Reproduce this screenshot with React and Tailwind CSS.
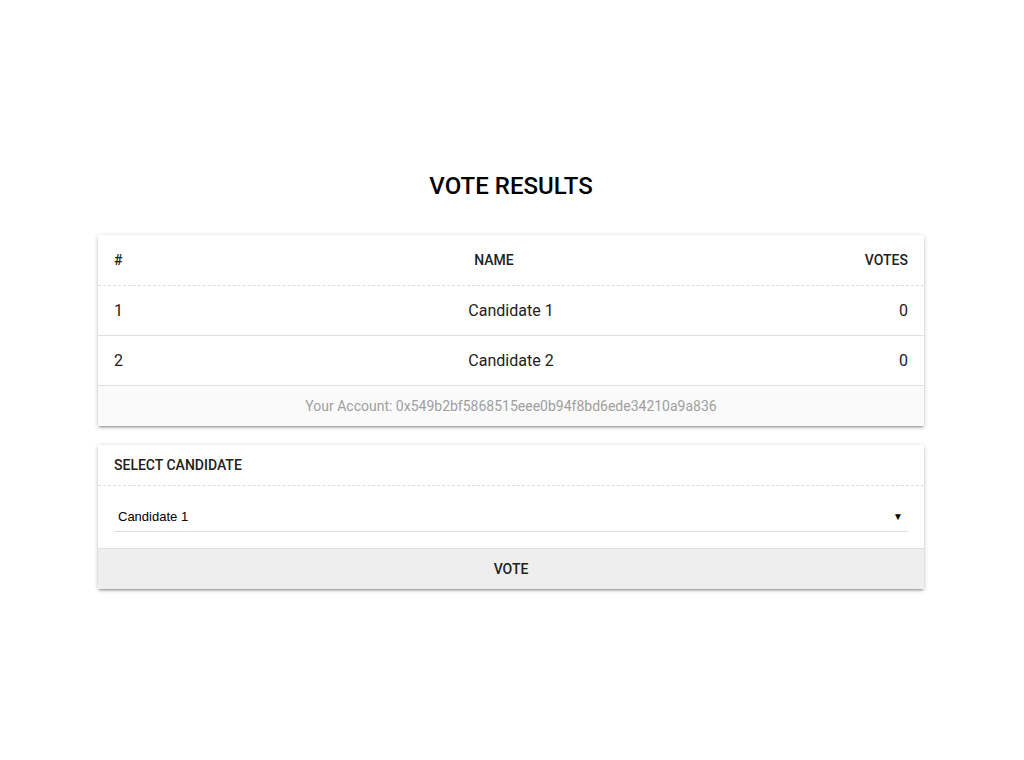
import React from 'react';

const candidates = [
  { id: 1, name: 'Candidate 1', votes: 0 },
  { id: 2, name: 'Candidate 2', votes: 0 },
];

const cardShadow =
  'shadow-[0_2px_2px_0_rgba(0,0,0,0.14),0_3px_1px_-2px_rgba(0,0,0,0.12),0_1px_5px_0_rgba(0,0,0,0.2)]';

export default function App() {
  return (
    <div className="min-h-[760px] bg-white font-['Roboto',sans-serif] text-[#212121]">
      <div className="w-[826px] ml-[98px] pt-[170px]">
        <h1 className="text-center text-[24px] leading-[32px] font-medium text-black">VOTE RESULTS</h1>

        {/* results table */}
        <div className={`mt-[33px] bg-white rounded-[2px] ${cardShadow}`}>
          <div className="grid grid-cols-[1fr_2fr_1fr] px-4 h-[51px] items-center border-b border-dashed border-[#dddddd] text-[14px] font-medium">
            <div>#</div>
            <div className="text-center pr-[34px]">NAME</div>
            <div className="text-right">VOTES</div>
          </div>
          {candidates.map((c) => (
            <div
              key={c.id}
              className="grid grid-cols-[1fr_2fr_1fr] px-4 h-[50px] items-center border-b border-[#e0e0e0] text-[16px]"
            >
              <div>{c.id}</div>
              <div className="text-center">{c.name}</div>
              <div className="text-right">{c.votes}</div>
            </div>
          ))}
          <div className="h-[40px] flex items-center justify-center bg-[#fafafa] text-[14px] text-[#9e9e9e]">
            Your Account: 0x549b2bf5868515eee0b94f8bd6ede34210a9a836
          </div>
        </div>

        {/* vote form */}
        <div className={`mt-[19px] bg-white rounded-[2px] ${cardShadow}`}>
          <div className="h-[41px] px-4 flex items-center border-b border-dashed border-[#dddddd] text-[14px] font-medium">
            SELECT CANDIDATE
          </div>
          <div className="px-4 pt-[14px] pb-4">
            <div className="h-[32px] flex items-center justify-between pl-1 pr-[5px] pt-[2px] border-b border-[#dddddd] font-['Liberation_Sans',sans-serif] text-[13px] text-black">
              <span>Candidate 1</span>
              <span className="text-[10px]">▼</span>
            </div>
          </div>
          <div className="h-[41px] flex items-center justify-center bg-[#eeeeee] border-t border-[#e0e0e0] text-[14px] font-medium">
            VOTE
          </div>
        </div>
      </div>
    </div>
  );
}
